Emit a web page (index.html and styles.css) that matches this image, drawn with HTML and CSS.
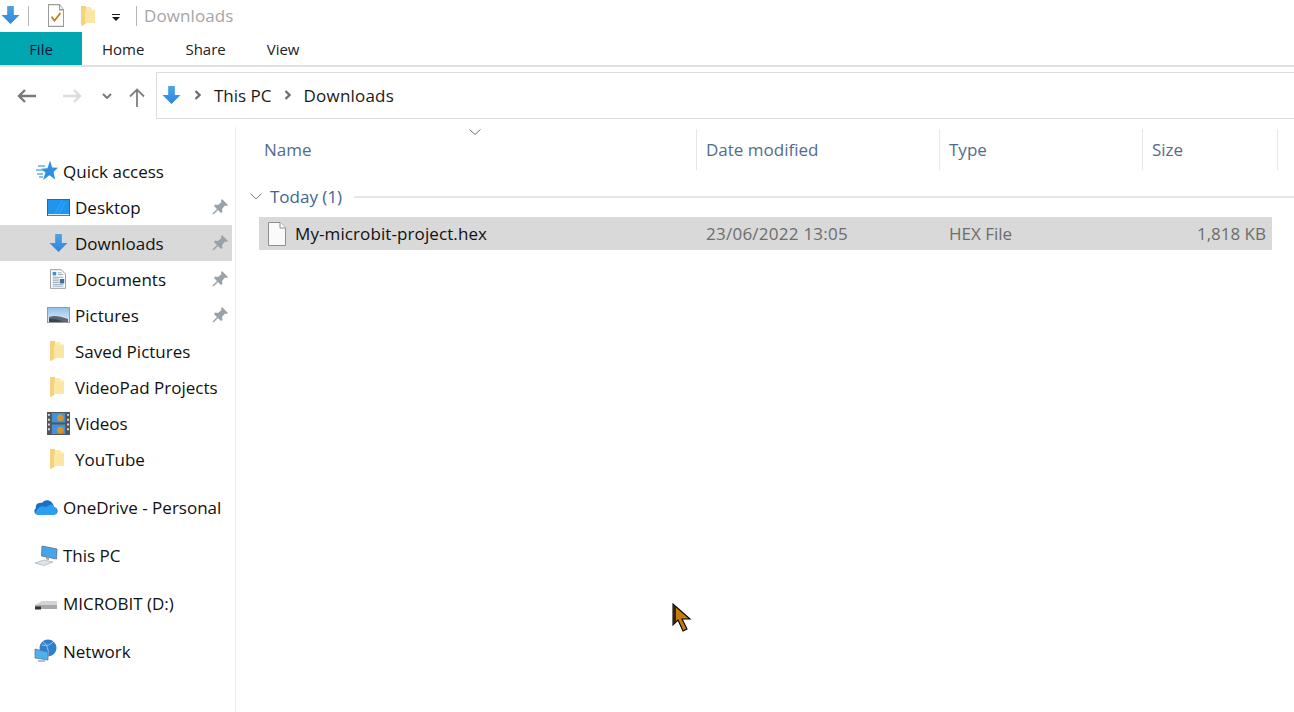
FILE: index.html
```html
<!DOCTYPE html>
<html lang="en">
<head>
<meta charset="utf-8">
<title>Downloads</title>
<link rel="stylesheet" href="styles.css">
</head>
<body>
<svg class="defs" width="0" height="0" aria-hidden="true">
  <defs>
    <linearGradient id="dl" x1="0" y1="0" x2="0" y2="1"><stop offset="0" stop-color="#4aa3ea"/><stop offset="1" stop-color="#2f84dc"/></linearGradient>
    <linearGradient id="sky" x1="0" y1="0" x2="0" y2="1"><stop offset="0" stop-color="#8fc0e8"/><stop offset="1" stop-color="#e4eef6"/></linearGradient>
    <symbol id="arrow" viewBox="0 0 20 20"><path d="M6.500 0.500h7v9.500h6l-9.500 9.500-9.500-9.500h6z" fill="url(#dl)"/></symbol>
    <symbol id="folder" viewBox="0 0 14 20" preserveAspectRatio="none"><path d="M4 1h6l1 2.500h3v13.500h-10z" fill="#fde9ae"/><path d="M0 0h5v17.500l-4 2.500-1-.5z" fill="#f5d27b"/><path d="M4 5h10v12h-10z" fill="#fce6a4"/></symbol>
    <symbol id="pin" viewBox="0 0 16 16"><path d="M10 0l6 6-1.500 1-1.500-.5-3 3.500.5 3-1.500 1-7-7 1-1.500 3 .5 3.500-3-.5-1.500z" fill="#99a2a9"/><path d="M6 10l-5 5" stroke="#99a2a9" stroke-width="1.500"/></symbol>
  </defs>
</svg>
<div class="window">
  <div class="qat">
    <svg class="ic-qa-arrow"><use href="#arrow"/></svg>
    <span class="qat-sep"></span>
    <svg class="ic-check" viewBox="0 0 18 18" preserveAspectRatio="none"><path d="M1.500.500h11l4 4v13h-15z" fill="#fff" stroke="#9b9b9b"/><path d="M12.500.500v4h4" fill="#eee" stroke="#9b9b9b"/><path d="M4.500 10l3 3 6-6" fill="none" stroke="#c97a12" stroke-width="1.600"/></svg>
    <svg class="ic-qa-folder"><use href="#folder"/></svg>
    <svg class="ic-drop" viewBox="0 0 10 8"><path d="M1 0h8v1h-8z M1 3h8l-4 4z" fill="#1a1a1a"/></svg>
    <span class="qat-sep qat-sep-b"></span>
    <span class="qat-title">Downloads</span>
  </div>

  <div class="tabs">
    <span class="tab tab-file">File</span>
    <span class="tab tab-home">Home</span>
    <span class="tab tab-share">Share</span>
    <span class="tab tab-view">View</span>
  </div>

  <div class="nav">
    <svg class="nav-back" viewBox="0 0 20 14"><path d="M19 7h-17M8 1l-6 6 6 6" fill="none" stroke="#7a7a7a" stroke-width="2.400"/></svg>
    <svg class="nav-fwd" viewBox="0 0 20 14"><path d="M1 7h17M12 1l6 6-6 6" fill="none" stroke="#dcdcdc" stroke-width="2.400"/></svg>
    <svg class="nav-drop" viewBox="0 0 10 6"><path d="M1 1l4 4 4-4" fill="none" stroke="#7a7a7a" stroke-width="2"/></svg>
    <svg class="nav-up" viewBox="0 0 16 19"><path d="M8 19v-17M1 8.500l7-7 7 7" fill="none" stroke="#7f7f7f" stroke-width="1.800"/></svg>
    <div class="address">
      <svg class="ic-addr-arrow"><use href="#arrow"/></svg>
      <svg class="crumb-sep crumb-sep-a" viewBox="0 0 7 10"><path d="M1.500 1l4 4-4 4" fill="none" stroke="#707070" stroke-width="2.400"/></svg>
      <span class="crumb">This PC</span>
      <svg class="crumb-sep crumb-sep-b" viewBox="0 0 7 10"><path d="M1.500 1l4 4-4 4" fill="none" stroke="#707070" stroke-width="2.400"/></svg>
      <span class="crumb crumb-last">Downloads</span>
    </div>
  </div>

  <div class="main">
    <nav class="side">
      <div class="row row-top">
        <svg class="ic-top" viewBox="0 0 24 24"><path d="M16 1.500l2.200 7 5.800.2-4.500 4.300 1.700 7.500-5.700-4.200-6.500 4.700 2.500-7.500-4.500-3.800 6.500-.5z" fill="#2f8fe0"/><path d="M4 7h7M2 11h7M3 15h6M5 18h4" stroke="#5fb0ec" stroke-width="1.300"/></svg>
        <span class="label">Quick access</span>
      </div>
      <div class="row row-child">
        <svg class="ic-child" viewBox="0 0 23 17" preserveAspectRatio="none"><rect x=".5" y=".5" width="22" height="16" fill="#1e95ee" stroke="#0f6fc0"/><path d="M15 2l-7 13M18 3l-6 12" stroke="#32a2f2" stroke-width="1.500"/><rect x="1" y="15" width="21" height="1.200" fill="#d8ecfa"/></svg>
        <span class="label">Desktop</span>
        <svg class="pin"><use href="#pin"/></svg>
      </div>
      <div class="row row-child row-selected">
        <svg class="ic-child ic-dl"><use href="#arrow"/></svg>
        <span class="label">Downloads</span>
        <svg class="pin"><use href="#pin"/></svg>
      </div>
      <div class="row row-child">
        <svg class="ic-child ic-doc" viewBox="0 0 18 22"><path d="M.5.500h12l5 5v16h-17z" fill="#fdfdfd" stroke="#8f8f8f"/><path d="M3 3h4v4h-4z" fill="#3c8fd8"/><path d="M9 4h4M9 6h6M3 9h12M3 11h7M3 13h7M3 15h7M3 17h12M3 19h12" stroke="#8aa0b4"/><path d="M11 11h5v5h-5z" fill="#3f6f96"/></svg>
        <span class="label">Documents</span>
        <svg class="pin"><use href="#pin"/></svg>
      </div>
      <div class="row row-child">
        <svg class="ic-child ic-pic" viewBox="0 0 23 16" preserveAspectRatio="none"><rect x=".5" y=".5" width="22" height="15" fill="url(#sky)" stroke="#9a9a9a"/><path d="M2 10c6-2 10-1 19 2v3h-19z" fill="#5d6876"/><path d="M2 12c5-1 9 0 14 3h-14z" fill="#3a4554"/></svg>
        <span class="label">Pictures</span>
        <svg class="pin"><use href="#pin"/></svg>
      </div>
      <div class="row row-child">
        <svg class="ic-child ic-fold"><use href="#folder"/></svg>
        <span class="label">Saved Pictures</span>
      </div>
      <div class="row row-child">
        <svg class="ic-child ic-fold"><use href="#folder"/></svg>
        <span class="label">VideoPad Projects</span>
      </div>
      <div class="row row-child">
        <svg class="ic-child ic-video" viewBox="0 0 24 24" preserveAspectRatio="none"><rect width="24" height="24" fill="#555"/><path d="M5 1h14v10h-14zM5 13h14v10h-14z" fill="#3f94dc"/><circle cx="14" cy="6" r="3.500" fill="#d8932f"/><circle cx="14" cy="19" r="3.500" fill="#d8932f"/><path d="M1 2h2v2h-2zM1 7h2v2h-2zM1 12h2v2h-2zM1 17h2v2h-2zM21 2h2v2h-2zM21 7h2v2h-2zM21 12h2v2h-2zM21 17h2v2h-2z" fill="#ddd"/></svg>
        <span class="label">Videos</span>
      </div>
      <div class="row row-child">
        <svg class="ic-child ic-fold"><use href="#folder"/></svg>
        <span class="label">YouTube</span>
      </div>
      <div class="row row-top row-group">
        <svg class="ic-top" viewBox="0 0 24 24"><path d="M5 20h14c6 0 6-7 1-8-1-7-9-9-12-4-5-1-7 3-6 5-3 2-2 7 3 7z" fill="#1c6fc4"/><path d="M1.500 17c3-5 6-7 10-5l4-2c2-1 4 0 4.500 2 4 1 4 8-1 8h-14c-2 0-3-1-3.500-3z" fill="#2c9ff0"/></svg>
        <span class="label">OneDrive - Personal</span>
      </div>
      <div class="row row-top row-group">
        <svg class="ic-top" viewBox="0 0 24 24"><path d="M8 3l15 3-.5 10-15-3z" fill="#43a5ee" stroke="#5d6d7c" stroke-width=".8"/><path d="M1 20l9-3 9 2-9 3.500z" fill="#dfe3e6" stroke="#a9afb5" stroke-width=".7"/><path d="M12 13.500l3 .5v3l-3-.7z" fill="#9aa3aa"/></svg>
        <span class="label">This PC</span>
      </div>
      <div class="row row-top row-group">
        <svg class="ic-top" viewBox="0 0 24 24"><path d="M1 14l7-4h15v5l-15 1h-7z" fill="#d4d4d4"/><path d="M1 14h22v4h-22z" fill="#a9a9a9"/><path d="M1 15.500h6v3h-6z" fill="#333"/></svg>
        <span class="label">MICROBIT (D:)</span>
      </div>
      <div class="row row-top row-group">
        <svg class="ic-top" viewBox="0 0 24 24"><circle cx="14" cy="9" r="8.500" fill="#2f7fd0"/><path d="M9 3c4 2 6 8 5 14M19 3c-3 3-6 4-11 3" stroke="#9cc8ee" fill="none"/><path d="M1 10l13 3v8l-13-2z" fill="#4fb0f0" stroke="#5d6d7c" stroke-width=".7"/><path d="M4 21h7v2h-7z" fill="#b8bec4"/></svg>
        <span class="label">Network</span>
      </div>
    </nav>

    <section class="files">
      <svg class="sort" viewBox="0 0 12 6"><path d="M.5.500l5.500 5 5.500-5" fill="none" stroke="#707070"/></svg>
      <div class="head">
        <span class="col col-name">Name</span>
        <span class="col">Date modified</span>
        <span class="col">Type</span>
        <span class="col">Size</span>
      </div>
      <div class="group">
        <svg class="group-chev" viewBox="0 0 12 7"><path d="M.5.500l5.500 5.500 5.500-5.500" fill="none" stroke="#6f7f90"/></svg>
        <span class="group-name">Today (1)</span>
        <span class="group-line"></span>
      </div>
      <div class="file">
        <span class="cell-name">
          <svg class="ic-file" viewBox="0 0 18 24"><path d="M.5.500h11.500l5.500 5.500v17.500h-17z" fill="#fafafa" stroke="#8e8e8e"/><path d="M12 .5v5.500h5.500" fill="#fff" stroke="#8e8e8e"/></svg>
          <span class="file-name">My-microbit-project.hex</span>
        </span>
        <span class="cell cell-date">23/06/2022 13:05</span>
        <span class="cell">HEX File</span>
        <span class="cell cell-size">1,818 KB</span>
      </div>
    </section>
  </div>
  <svg class="cursor" viewBox="0 0 20 30"><path d="M1 1v21l5-5 5 11 4-2-5-10h8z" fill="#c67c0c" stroke="#000" stroke-width="1.100"/><path d="M1 1v21l3-3v-15z" fill="#3a2308"/></svg>
</div>
</body>
</html>
```
FILE: styles.css
```css
* { box-sizing: border-box; }
html, body { margin: 0; padding: 0; background: #fff; }
body { font-family: "Open Sans", "Noto Sans", sans-serif; font-size: 17px; color: #111; overflow: hidden; }
.defs { position: absolute; }
svg { display: block; flex: none; }

.window { position: relative; width: 1294px; height: 712px; display: flex; flex-direction: column; overflow: hidden; }

.qat { height: 32px; display: flex; align-items: center; padding-left: 1px; }
.ic-qa-arrow { width: 19px; height: 20px; margin-top: -3px; }
.qat-sep { width: 1px; height: 20px; background: #b5b5b5; margin-left: 8px; margin-top: -1px; }
.ic-check { width: 18px; height: 23px; margin-left: 18px; margin-top: -1px; }
.ic-qa-folder { width: 14px; height: 20px; margin-left: 16px; margin-top: -1px; }
.ic-drop { width: 10px; height: 8px; margin-left: 16px; margin-top: 3px; }
.qat-sep-b { margin-left: 15px; }
.qat-title { margin-left: 7px; margin-top: -1px; color: #a6a6a6; letter-spacing: .1px; }

.tabs { height: 35px; display: flex; align-items: stretch; border-bottom: 2px solid #e1e1e1; font-size: 15px; }
.tab { display: flex; align-items: center; }
.tab-file { width: 82px; justify-content: center; background: #00a6b0; color: #04143a; }
.tab-home { margin-left: 20px; color: #222; }
.tab-share { margin-left: 41px; color: #222; }
.tab-view { margin-left: 41px; color: #222; }

.nav { height: 60px; display: flex; align-items: center; padding-bottom: 4px; }
.nav-back { width: 20px; height: 14px; margin-left: 17px; margin-top: 2px; }
.nav-fwd { width: 20px; height: 14px; margin-left: 25px; margin-top: 2px; }
.nav-drop { width: 10px; height: 6px; margin-left: 20px; margin-top: 2px; }
.nav-up { width: 16px; height: 19px; margin-left: 17px; margin-top: 4px; }
.address { height: 47px; flex: 1; margin-left: 11px; margin-right: -2px; border: 1px solid #dcdcdc; display: flex; align-items: center; padding-left: 5px; color: #1a1a1a; }
.ic-addr-arrow { width: 19px; height: 20px; margin-top: -1px; }
.crumb-sep { width: 7px; height: 10px; }
.crumb-sep-a { margin-left: 13px; margin-right: 13px; }
.crumb-sep-b { margin-left: 12px; margin-right: 13px; }
.crumb-last { letter-spacing: .2px; }

.main { flex: 1; display: flex; min-height: 0; }
.side { width: 236px; border-right: 1px solid #ededed; padding-top: 26px; display: flex; flex-direction: column; align-items: flex-start; }
.row { width: 232px; height: 36px; display: flex; align-items: center; position: relative; color: #111; }
.row-top { padding-left: 34px; }
.row-group { margin-top: 12px; }
.row-child { padding-left: 47px; }
.row-selected { background: #d9d9d9; }
.ic-top { width: 24px; height: 24px; margin-right: 5px; }
.ic-child { width: 23px; height: 17px; margin-right: 5px; }
.ic-dl { width: 19px; height: 20px; margin-left: 2px; margin-right: 7px; }
.ic-doc { width: 16px; height: 22px; margin-left: 3px; margin-right: 9px; }
.ic-pic { height: 16px; }
.ic-video { height: 23px; }
.ic-fold { width: 14px; height: 20px; margin-left: 3px; margin-right: 11px; }
.pin { position: absolute; right: 4px; top: 10px; width: 16px; height: 16px; }

.files { flex: 1; min-width: 0; position: relative; color: #333; }
.sort { position: absolute; left: 233px; top: 2px; width: 12px; height: 6px; }
.head { display: grid; grid-template-columns: 461px 243px 203px 135px; height: 43px; margin-top: 2px; color: #526d8c; }
.col { border-right: 1px solid #e7e7e7; padding-left: 9px; padding-top: 9px; height: 41px; }
.col-name { padding-left: 28px; }
.group { display: flex; align-items: center; height: 32px; padding-left: 14px; color: #3f6593; margin-top: 8px; }
.group-chev { width: 12px; height: 7px; }
.group-name { margin-left: 8px; }
.group-line { flex: 1; height: 2px; background: #e5e5e5; margin-left: 12px; margin-top: 1px; }
.file { display: grid; grid-template-columns: 437px 243px 203px 130px; width: 1013px; height: 33px; margin-left: 23px; margin-top: 5px; background: #d9d9d9; align-items: center; color: #6d6d6d; }
.cell-name { display: flex; align-items: center; padding-left: 9px; color: #111; }
.file-name { letter-spacing: .1px; }
.ic-file { width: 18px; height: 24px; margin-right: 9px; }
.cell { padding-left: 10px; }
.cell-date { letter-spacing: .25px; }
.cell-size { text-align: right; padding-right: 6px; }

.cursor { position: absolute; left: 672px; top: 603px; width: 20px; height: 30px; }
```
